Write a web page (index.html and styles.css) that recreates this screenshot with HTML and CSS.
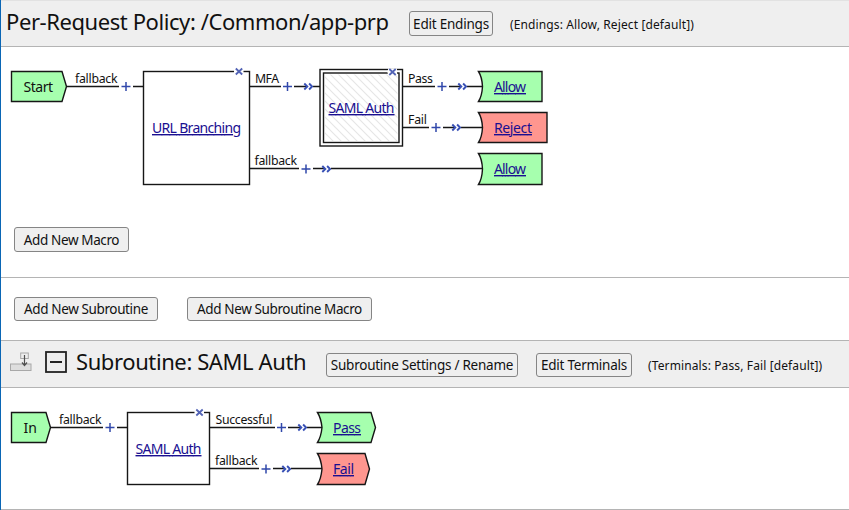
FILE: index.html
```html
<!DOCTYPE html>
<html lang="en">
<head>
<meta charset="utf-8">
<title>Per-Request Policy</title>
<link rel="stylesheet" href="styles.css">
</head>
<body>
<svg class="defs" width="0" height="0" aria-hidden="true">
  <defs>
    <pattern id="hatch" width="8" height="8" patternUnits="userSpaceOnUse">
      <path d="M-1 -1L9 9M-1 7L1 9M7 -1L9 1" stroke="#e6e6e6" stroke-width="1.2"/>
    </pattern>
    <symbol id="plus" viewBox="-5 -5 10 10" overflow="visible"><path class="blue" d="M-4.5 0H4.5M0 -4.5V4.5"/></symbol>
    <symbol id="close" viewBox="-5 -5 10 10" overflow="visible"><path class="gap" d="M-5 0H4.5"/><path class="cross" d="M-3.2 -3L3.2 3M3.2 -3L-3.2 3"/></symbol>
    <symbol id="chev" viewBox="-5 -5 10 10" overflow="visible"><path class="chev" d="M-4.2 -3L-1.2 0L-4.2 3M0.6 -3L3.6 0L0.6 3"/></symbol>
  </defs>
</svg>
<main class="editor">
  <header class="bar policy-bar">
    <h1 class="title policy-title">Per-Request Policy: /Common/app-prp</h1>
    <button class="btn edit-endings">Edit Endings</button>
    <span class="note endings-note">(Endings: Allow, Reject [default])</span>
  </header>

  <section class="policy">
    <svg class="diagram" width="848" height="160" viewBox="1 47 848 160">
      <g class="wire">
        <path d="M67 86.5H119M133 86.5H143M250 86.5H281M294 86.5H307M313 86.5H320M403 86.5H435M449 86.5H461M467 86.5H483"/>
        <path d="M403 127.5H429M443 127.5H455M461 127.5H483M250 168.5H299M313 168.5H325M331 168.5H483"/>
      </g>
      <path class="node go" d="M11.5 71.5H62L66.500 86.5L62 101.500H11.500Z"/>
      <rect class="node" x="143.500" y="71.500" width="106" height="113"/>
      <rect class="node" x="320" y="69.500" width="82.500" height="76.500"/>
      <rect class="node" x="323.500" y="73" width="75.500" height="69.500"/>
      <rect x="325" y="74.500" width="72.500" height="66.500" fill="url(#hatch)"/>
      <path class="node go" d="M478.500 71.500H542V101.500H478.500Q482 96 482.500 86.500Q482 77 478.500 71.500Z"/>
      <path class="node stop" d="M478.500 112.500H547V142.500H478.500Q482 137 482.500 127.500Q482 118 478.500 112.500Z"/>
      <path class="node go" d="M478.500 153.500H542V184.500H478.500Q482 179 482.500 169Q482 159 478.500 153.500Z"/>
      <path class="gap-wide" d="M388 71.500H397"/>
      <g>
        <use href="#close" x="234" y="66.500" width="10" height="10"/>
        <use href="#close" x="387.500" y="67" width="10" height="10"/>
        <use href="#plus" x="121" y="81.500" width="10" height="10"/>
        <use href="#plus" x="282.500" y="81.500" width="10" height="10"/>
        <use href="#plus" x="437" y="81.500" width="10" height="10"/>
        <use href="#plus" x="431" y="122.500" width="10" height="10"/>
        <use href="#plus" x="301" y="164" width="10" height="10"/>
        <use href="#chev" x="303.500" y="81.500" width="10" height="10"/>
        <use href="#chev" x="457.500" y="81.500" width="10" height="10"/>
        <use href="#chev" x="451.500" y="122.500" width="10" height="10"/>
        <use href="#chev" x="321.500" y="164" width="10" height="10"/>
      </g>
      <g class="label">
        <text x="75" y="83" textLength="42.500">fallback</text>
        <text x="255" y="83" textLength="24">MFA</text>
        <text x="408" y="83" textLength="25">Pass</text>
        <text x="408" y="124" textLength="19">Fail</text>
        <text x="254.500" y="165" textLength="42.500">fallback</text>
      </g>
      <g class="name">
        <text x="23.500" y="92" textLength="29.500">Start</text>
        <text class="link" x="152" y="133" textLength="89">URL Branching</text>
        <text class="link" x="328.500" y="113" textLength="66">SAML Auth</text>
        <text class="link" x="494" y="92" textLength="32">Allow</text>
        <text class="link" x="494" y="133" textLength="38">Reject</text>
        <text class="link" x="494" y="174" textLength="32">Allow</text>
      </g>
    </svg>
    <button class="btn add-macro">Add New Macro</button>
  </section>

  <section class="subroutine-actions">
    <button class="btn add-subroutine">Add New Subroutine</button>
    <button class="btn add-subroutine-macro">Add New Subroutine Macro</button>
  </section>

  <header class="bar subroutine-bar">
    <svg class="insert-icon" width="24" height="22" viewBox="9 351 24 22">
      <rect x="10.500" y="364" width="20.500" height="6.500" fill="#dedede" stroke="#a8a8a8"/>
      <rect x="20.700" y="353" width="7.600" height="5.500" fill="#eee" stroke="#a8a8a8"/>
      <path d="M24.500 355V365M22 362.500L24.500 365.500L27 362.500" fill="none" stroke="#505050" stroke-width="1.200"/>
    </svg>
    <svg class="collapse-icon" width="22" height="22" viewBox="0 0 22 22">
      <rect x="1" y="1" width="20" height="20" fill="#ededed" stroke="#222" stroke-width="1.800"/>
      <path d="M5 11H17" stroke="#222" stroke-width="2"/>
    </svg>
    <h2 class="title subroutine-title">Subroutine: SAML Auth</h2>
    <button class="btn rename">Subroutine Settings / Rename</button>
    <button class="btn edit-terminals">Edit Terminals</button>
    <span class="note terminals-note">(Terminals: Pass, Fail [default])</span>
  </header>

  <section class="subroutine">
    <svg class="diagram" width="848" height="121" viewBox="1 388 848 121">
      <path class="wire" d="M50 427.500H103M117 427.500H127M210 427.500H275M288 427.500H301M307 427.500H322M210 468.500H259M273 468.500H285M291 468.500H322"/>
      <path class="node go" d="M11.500 412.500H46L50.500 427.500L46 442.500H11.500Z"/>
      <rect class="node" x="127.500" y="412.500" width="82" height="72"/>
      <path class="node go" d="M317.500 412.500H371L375.500 427.500L371 442.500H317.500Q321 437 322 427.500Q321 418 317.500 412.500Z"/>
      <path class="node stop" d="M317.500 453.500H365L369.500 469L365 484.500H317.500Q321 479 322 469Q321 459 317.500 453.500Z"/>
      <g>
        <use href="#close" x="194.500" y="407.500" width="10" height="10"/>
        <use href="#plus" x="105" y="422.500" width="10" height="10"/>
        <use href="#plus" x="276.500" y="422.500" width="10" height="10"/>
        <use href="#plus" x="261" y="464" width="10" height="10"/>
        <use href="#chev" x="297.500" y="422.500" width="10" height="10"/>
        <use href="#chev" x="281.500" y="464" width="10" height="10"/>
      </g>
      <g class="label">
        <text x="59" y="424" textLength="42.500">fallback</text>
        <text x="215.500" y="424" textLength="57">Successful</text>
        <text x="215" y="465" textLength="42.500">fallback</text>
      </g>
      <g class="name">
        <text x="23.500" y="433" textLength="13.500">In</text>
        <text class="link" x="135.500" y="454" textLength="66">SAML Auth</text>
        <text class="link" x="333" y="433" textLength="28">Pass</text>
        <text class="link" x="333" y="474" textLength="21">Fail</text>
      </g>
    </svg>
  </section>
</main>
</body>
</html>
```
FILE: styles.css
```css
* { box-sizing: border-box; }
body {
  margin: 0;
  background: #fff;
  color: #111;
  font-family: Tahoma, "Noto Sans", "Open Sans", sans-serif;
  overflow: hidden;
}
.defs { position: absolute; }
.editor { height: 510px; border-left: 1px solid #0a66b5; }
.bar {
  display: flex;
  background: #efefef;
  border-bottom: 1px solid #b4b4b4;
}
.policy-bar { height: 47px; border-top: 1px solid #e2e2e2; }
.title {
  margin: 0;
  flex: none;
  font-weight: 400;
  line-height: 30px;
  white-space: nowrap;
}
.policy-title { width: 383px; margin: 5px 0 0 5px; font-size: 22px; letter-spacing: -0.42px; }
.btn {
  flex: none;
  height: 25px;
  padding: 2px 0 0;
  border: 1px solid #858585;
  border-radius: 3px;
  background: #efefef;
  color: #111;
  font: 13.5px/21px Tahoma, "Noto Sans", "Open Sans", sans-serif;
  letter-spacing: -0.38px;
  white-space: nowrap;
}
.edit-endings { width: 84px; margin: 10px 0 0 20px; letter-spacing: -0.22px; }
.note { flex: none; font-size: 12px; line-height: 18px; letter-spacing: 0.12px; white-space: nowrap; }
.endings-note { margin: 15px 0 0 17px; }

.policy { height: 231px; border-bottom: 1px solid #b4b4b4; }
.diagram { display: block; }
.add-macro { width: 115px; margin: 20px 0 0 13px; display: block; }

.subroutine-actions { display: flex; gap: 29px; height: 62px; padding: 19px 0 0 13px; }
.add-subroutine { width: 144px; }
.add-subroutine-macro { width: 185px; }
.subroutine-actions .btn, .subroutine-bar .btn { height: 24px; padding: 0; }

.subroutine-bar { height: 48px; border-top: 1px solid #b4b4b4; }
.insert-icon { flex: none; margin: 10px 0 0 8px; }
.collapse-icon { flex: none; margin: 10px 0 0 12px; }
.subroutine-title { width: 231px; margin: 5px 0 0 9px; font-size: 22px; letter-spacing: -0.4px; }
.rename { width: 192px; margin: 12px 0 0 19px; }
.edit-terminals { width: 96px; margin: 12px 0 0 18px; }
.subroutine-bar .btn { letter-spacing: -0.25px; }
.terminals-note { margin: 16px 0 0 16px; }
.subroutine { height: 122px; border-bottom: 1px solid #b4b4b4; }

.wire { fill: none; stroke: #161616; stroke-width: 1.5; }
.node { fill: #fff; stroke: #161616; stroke-width: 1.4; }
.go { fill: #a6ffae; }
.stop { fill: #ff968f; }
.blue { stroke: #3148ab; stroke-width: 1.5; }
.cross { stroke: #5263b5; stroke-width: 1.8; }
.gap { stroke: #fff; stroke-width: 3; }
.gap-wide { stroke: #fff; stroke-width: 6; }
.chev { fill: none; stroke: #3850b5; stroke-width: 1.9; }
.label { font-size: 12.3px; fill: #111; }
.name { font-size: 14px; fill: #111; }
.link { fill: #1a0f91; text-decoration: underline; }
```
